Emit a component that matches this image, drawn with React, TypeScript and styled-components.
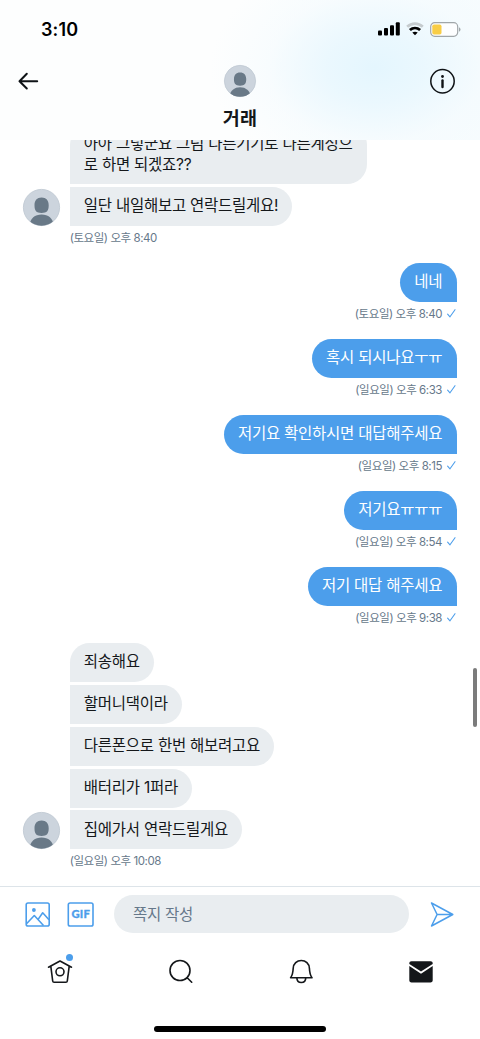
import React from "react";
import styled, { createGlobalStyle } from "styled-components";

const Global = createGlobalStyle`
  * { box-sizing: border-box; }
  body { margin: 0; background: #fff; color: #14171a; font-family: Inter, "Noto Sans CJK KR", sans-serif; }
  svg { display: block; overflow: visible; }
  button { border: 0; padding: 0; background: none; color: inherit; display: block; }
`;

const Screen = styled.div`
  position: relative;
  width: 480px;
  height: 1039px;
  display: flex;
  flex-direction: column;
  overflow: hidden;
`;

const Header = styled.header`
  height: 140px;
  flex: none;
  background:
    radial-gradient(ellipse 165px 115px at 375px 68px, #e4f6fe 0%, rgba(232, 247, 254, 0.85) 30%, rgba(242, 250, 254, 0.45) 65%, rgba(255, 255, 255, 0) 100%),
    linear-gradient(90deg, #fdfefe 55%, #f7fcfe 100%);
`;

const StatusBar = styled.div`
  height: 58px;
  display: flex;
  align-items: center;
  justify-content: space-between;
  padding: 0 19.5px 0 41px;
`;

const Clock = styled.span`
  font-size: 18px;
  font-weight: 600;
  line-height: 20px;
  letter-spacing: 0.15px;
  padding-top: 1px;
  color: #000;
`;

const StatusIcons = styled.div`
  display: flex;
  align-items: center;
  gap: 6px;
`;

const TitleBar = styled.div`
  height: 82px;
  display: grid;
  grid-template-columns: 1fr auto 1fr;
  padding: 7px 24px 0 18px;
`;

const BackButton = styled.button`
  height: 20px;
  margin-top: 6px;
`;

const InfoButton = styled.button`
  height: 27px;
  margin: 3px 0 0;
  justify-self: end;
`;

const Contact = styled.div`
  display: flex;
  flex-direction: column;
  align-items: center;
  margin-left: 6px;
`;

const ContactName = styled.h1`
  margin: 9px 0 0;
  font-size: 18.5px;
  font-weight: 700;
  line-height: 25px;
  letter-spacing: 0.2px;
`;

const Thread = styled.main`
  flex: 1;
  min-height: 0;
  overflow: hidden;
  display: flex;
  flex-direction: column;
  justify-content: flex-end;
  gap: 15px;
  padding: 0 23px 14.7px;
`;

const Group = styled.section<{ $mine?: boolean }>`
  flex: none;
  display: grid;
  grid-template-columns: ${(p) => (p.$mine ? "1fr" : "37px 1fr")};
  column-gap: 9.7px;
  justify-items: ${(p) => (p.$mine ? "end" : "start")};
`;

const AvatarSlot = styled.div`
  align-self: end;
`;

const Stack = styled.div`
  display: flex;
  flex-direction: column;
  align-items: flex-start;
  gap: 2.8px;
`;

const Bubble = styled.p<{ $mine?: boolean; $joined?: boolean }>`
  margin: 0;
  padding: 9.3px ${(p) => (p.$mine ? "14.7px" : "14.2px")} 9.3px 14px;
  font-size: 15.5px;
  line-height: 20.4px;
  letter-spacing: -0.26px;
  word-spacing: 0.1px;
  white-space: pre;
  color: ${(p) => (p.$mine ? "#fff" : "#14171a")};
  background: ${(p) => (p.$mine ? "#4c9eeb" : "#e9edf0")};
  border-radius: ${(p) => (p.$mine ? "20px 20px 0 20px" : p.$joined ? "0 20px 20px 0" : "20px 20px 20px 0")};
`;

const Stamp = styled.div<{ $mine?: boolean }>`
  grid-column: ${(p) => (p.$mine ? 1 : 2)};
  display: flex;
  align-items: center;
  gap: 5px;
  height: 22px;
  font-size: 11.5px;
  line-height: 22px;
  letter-spacing: -0.44px;
  color: #66788a;
  padding: ${(p) => (p.$mine ? "1px 1px 0 0" : "1px 0 0")};
`;

const Composer = styled.footer`
  flex: none;
  height: 56px;
  border-top: 1.5px solid #dde4e9;
  display: flex;
  align-items: center;
  padding: 0 26px 1px 25px;
`;

const ToolButton = styled.button`
  margin-right: 17px;
`;

const Field = styled.div`
  width: 295px;
  height: 38px;
  margin: 0 21px 0 3px;
  padding-left: 19px;
  border-radius: 19px;
  background: #e9edf0;
  font-size: 15.5px;
  line-height: 39px;
  letter-spacing: -0.26px;
  color: #66788a;
`;

const TabBar = styled.nav`
  flex: none;
  height: 97px;
  display: grid;
  grid-template-columns: repeat(4, 1fr);
  grid-template-rows: 58px 1fr;
  justify-items: center;
  align-items: center;
`;

const Tab = styled.button`
  position: relative;
`;

const Dot = styled.span`
  position: absolute;
  top: -5px;
  right: 0;
  width: 7.5px;
  height: 7.5px;
  border-radius: 50%;
  background: #4c9eeb;
`;

const HomeIndicator = styled.div`
  grid-column: 1 / -1;
  align-self: start;
  margin-top: 25.5px;
  width: 172px;
  height: 6px;
  border-radius: 3px;
  background: #000;
`;

const ScrollThumb = styled.div`
  position: absolute;
  right: 3px;
  top: 668px;
  width: 4px;
  height: 59px;
  border-radius: 2px;
  background: #7b7b7b;
`;

const Avatar = ({ size }: { size: number }) => (
  <svg width={size} height={size} viewBox="0 0 37 37">
    <defs>
      <clipPath id="face"><circle cx="18.5" cy="18.5" r="18.2" /></clipPath>
    </defs>
    <circle cx="18.5" cy="18.5" r="18.1" fill="#ccd4dd" stroke="#bdc7d0" strokeWidth="0.8" />
    <g clipPath="url(#face)" fill="#697987">
      <path d="M18.600 8.600c4.600 0 7.100 3 7.100 7.700 0 5.400-1.700 7.700-7.100 7.700s-7.100-2.300-7.100-7.700c0-4.700 2.500-7.700 7.100-7.700z" />
      <path d="M6 37c1.200-7.600 6-11.400 12.600-11.400S30 29.400 31.200 37z" />
    </g>
  </svg>
);

const Check = () => (
  <svg width="9" height="9" viewBox="0 0 9 9" fill="none" stroke="#4c9eeb" strokeWidth="1.1" strokeLinecap="round" strokeLinejoin="round">
    <path d="M.6 5.200 3 7.800 8 .700" />
  </svg>
);

type Entry = { mine?: boolean; lines: string[]; time: string };

const entries: Entry[] = [
  { lines: ["아아 그렇군요 그럼 다른기기로 다른계정으\n로 하면 되겠죠??", "일단 내일해보고 연락드릴게요!"], time: "(토요일) 오후 8:40" },
  { mine: true, lines: ["네네"], time: "(토요일) 오후 8:40" },
  { mine: true, lines: ["혹시 되시나요ㅜㅠ"], time: "(일요일) 오후 6:33" },
  { mine: true, lines: ["저기요 확인하시면 대답해주세요"], time: "(일요일) 오후 8:15" },
  { mine: true, lines: ["저기요ㅠㅠㅠ"], time: "(일요일) 오후 8:54" },
  { mine: true, lines: ["저기 대답 해주세요"], time: "(일요일) 오후 9:38" },
  { lines: ["죄송해요", "할머니댁이라", "다른폰으로 한번 해보려고요", "배터리가 1퍼라", "집에가서 연락드릴게요"], time: "(일요일) 오후 10:08" },
];

const MessageGroup = ({ mine, lines, time }: Entry) => (
  <Group $mine={mine}>
    {!mine && <AvatarSlot><Avatar size={37} /></AvatarSlot>}
    <Stack>
      {lines.map((line, i) => <Bubble key={line} $mine={mine} $joined={i > 0}>{line}</Bubble>)}
    </Stack>
    <Stamp $mine={mine}>{time}{mine && <Check />}</Stamp>
  </Group>
);

export default function App() {
  return (
    <>
      <Global />
      <Screen>
        <Header>
          <StatusBar>
            <Clock>3:10</Clock>
            <StatusIcons>
              <svg width="22" height="14" viewBox="0 0 22 14" fill="#000">
                <rect x="0" y="8.500" width="4" height="5" rx="1" />
                <rect x="6" y="6" width="4" height="7.500" rx="1" />
                <rect x="12" y="3.200" width="4" height="10.300" rx="1" />
                <rect x="17.800" y="0.200" width="4" height="13.300" rx="1" />
              </svg>
              <svg width="18" height="14" viewBox="0 0 18 14" fill="none">
                <path d="M1.200 4.700C5.600.500 12.400.500 16.800 4.700" stroke="#c5cbce" strokeWidth="2.700" />
                <path d="M3.900 8.100C6.900 5.300 11.100 5.300 14.100 8.100" stroke="#000" strokeWidth="2.700" />
                <path d="M6.300 10.600C7.900 9.300 10.100 9.300 11.700 10.600L9 13.300z" fill="#000" />
              </svg>
              <svg width="31" height="15" viewBox="0 0 31 15">
                <rect x=".7" y=".7" width="27" height="13.600" rx="4" fill="#fdfeff" stroke="#a0a6a9" strokeWidth="1.200" />
                <rect x="2.300" y="2.500" width="9.200" height="10" rx="1.800" fill="#f8cd46" />
                <path d="M29.200 5.300c1.700.7 1.700 3.700 0 4.400z" fill="#8e9497" />
              </svg>
            </StatusIcons>
          </StatusBar>
          <TitleBar>
            <BackButton aria-label="뒤로">
              <svg width="21" height="20" viewBox="0 0 21 20" fill="none" stroke="#0f1316" strokeWidth="2" strokeLinecap="round" strokeLinejoin="round">
                <path d="M19.200 10.200H1.500M8.800 2.800 1.500 10.200l7.300 7.300" />
              </svg>
            </BackButton>
            <Contact>
              <Avatar size={32} />
              <ContactName>거래</ContactName>
            </Contact>
            <InfoButton aria-label="정보">
              <svg width="27" height="27" viewBox="0 0 27 27" fill="none" stroke="#0f1316">
                <circle cx="13.500" cy="13.300" r="11.700" strokeWidth="1.500" />
                <path d="M13.500 12.500v6.500" strokeWidth="2.400" strokeLinecap="round" />
                <circle cx="13.500" cy="8.500" r="1.400" fill="#0f1316" stroke="none" />
              </svg>
            </InfoButton>
          </TitleBar>
        </Header>

        <Thread>
          {entries.map((entry, i) => <MessageGroup key={i} {...entry} />)}
        </Thread>

        <Composer>
          <ToolButton aria-label="사진">
            <svg width="25" height="25" viewBox="0 0 25 25" fill="none" stroke="#4c9eeb" strokeWidth="1.600" strokeLinejoin="round">
              <rect x="1.200" y="1" width="23" height="23" rx="1.800" />
              <path d="m1.500 21.800 7.800-8.300 9.200 10M13.300 17.100l4.400-6.300 6.300 7" />
              <circle cx="8.900" cy="8" r="1.900" fill="#4c9eeb" stroke="none" />
            </svg>
          </ToolButton>
          <ToolButton aria-label="GIF">
            <svg width="27" height="25" viewBox="0 0 27 25">
              <rect x="1.300" y="1" width="24.700" height="23" rx="1.800" fill="none" stroke="#4c9eeb" strokeWidth="1.600" />
              <text x="13.700" y="16.300" textAnchor="middle" fontFamily="Lato" fontWeight="900" fontSize="11.300" letterSpacing=".2" fill="#4c9eeb" stroke="#4c9eeb" strokeWidth=".3">GIF</text>
            </svg>
          </ToolButton>
          <Field>쪽지 작성</Field>
          <button aria-label="보내기">
            <svg width="24" height="25" viewBox="0 0 24 25" fill="none" stroke="#4c9eeb" strokeWidth="1.500" strokeLinejoin="round">
              <path d="M1.500 1 22.800 12.500 1.500 24l5.600-11.500zM7.100 12.500h15.700" />
            </svg>
          </button>
        </Composer>

        <TabBar>
          <Tab aria-label="홈">
            <svg width="26" height="25" viewBox="0 0 26 25" fill="none" stroke="#14171a" strokeWidth="1.600" strokeLinecap="round" strokeLinejoin="round">
              <path d="M1.500 8.200 13 2l11.500 6.200M3.800 7.200 5.700 22c.1.900.600 1.300 1.400 1.300h11.800c.8 0 1.300-.4 1.400-1.300l1.900-14.800" />
              <circle cx="13" cy="12.800" r="4" />
            </svg>
            <Dot />
          </Tab>
          <Tab aria-label="검색">
            <svg width="25" height="25" viewBox="0 0 25 25" fill="none" stroke="#14171a" strokeWidth="1.600" strokeLinecap="round">
              <circle cx="12" cy="11.500" r="10" />
              <path d="m19.200 18.700 4.500 4.500" />
            </svg>
          </Tab>
          <Tab aria-label="알림">
            <svg width="25" height="25" viewBox="0 0 25 25" fill="none" stroke="#14171a" strokeWidth="1.600" strokeLinejoin="round">
              <path d="M2.600 18.800c2-2.700 2.400-5.100 2.600-9.500C5.400 4.700 8.900 1.500 13.300 1.500s7.900 3.200 8.100 7.800c.2 4.400.6 6.800 2.600 9.500z" />
              <path d="M8.900 19c0 2.700 1.800 4.500 4.400 4.500s4.400-1.800 4.400-4.500" />
            </svg>
          </Tab>
          <Tab aria-label="쪽지">
            <svg width="25" height="25" viewBox="0 0 25 25" fill="#14171a">
              <path d="M1.300 4.500C1.300 3 2.100 2.300 3.500 2.300h19c1.400 0 2.200.7 2.200 2.200v.5L13 12.500 1.300 5z" />
              <path d="M1.300 7 13 14.700 24.700 7v14.200c0 1.400-.8 2.200-2.200 2.200h-19c-1.400 0-2.200-.8-2.200-2.200z" />
            </svg>
          </Tab>
          <HomeIndicator />
        </TabBar>
        <ScrollThumb />
      </Screen>
    </>
  );
}
